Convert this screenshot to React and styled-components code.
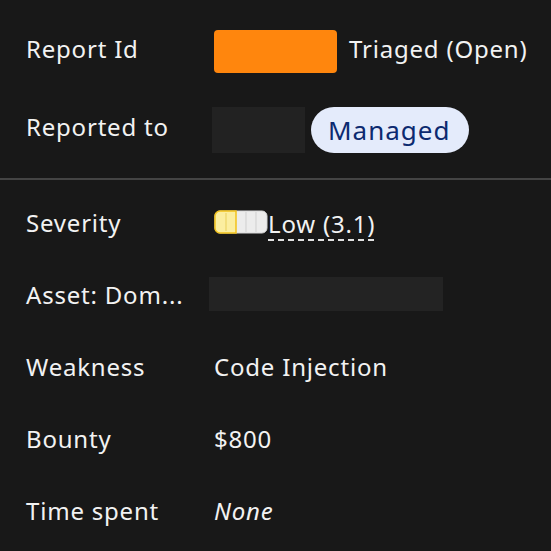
import React from 'react'
import styled, { createGlobalStyle } from 'styled-components';

const GlobalStyle = createGlobalStyle`
  html, body {
    margin: 0;
    padding: 0;
    background: #181818;
  }
  body {
    font-family: "Noto Sans", "Open Sans", sans-serif;
    color: #f2f2f2;
  }
`

const SeverityBar = () => (
  <svg width="54" height="24" viewBox="0 0 54 24">
    <rect x="1" y="1" width="52" height="22" rx="5" fill="#ececec" stroke="#d6d6d6" strokeWidth="1" />
    <line x1="32" y1="2" x2="32" y2="22" stroke="#cfcfcf" strokeWidth="1" />
    <line x1="42" y1="2" x2="42" y2="22" stroke="#cfcfcf" strokeWidth="1" />
    <path d="M6 1 H22 V23 H6 A5 5 0 0 1 1 18 V6 A5 5 0 0 1 6 1 Z" fill="#fbeea0" stroke="#f2c21b" strokeWidth="1.5" />
    <line x1="12" y1="3" x2="12" y2="21" stroke="#e9cf5a" strokeWidth="1" />
  </svg>
)

const App = () => {
  return (
    <Page>
      <GlobalStyle />
      <TopSection>
        <Row $height={78}>
          <Label>Report Id</Label>
          <Value>
            <Redacted $w={123} $h={43} $color="#ff860d" $radius={4} $top={6} />
            <span>Triaged (Open)</span>
          </Value>
        </Row>
        <Row $height={78}>
          <Label>Reported to</Label>
          <Value $gap={6} $offset={8}>
            <Redacted $w={93} $h={46} $color="#222222" $radius={0} $shift={-2} />
            <Pill>Managed</Pill>
          </Value>
        </Row>
      </TopSection>
      <Divider />
      <BottomSection>
        <Row>
          <Label>Severity</Label>
          <Value $gap={0}>
            <SeverityBar />
            <Dashed>Low (3.1)</Dashed>
          </Value>
        </Row>
        <Row>
          <Label>Asset: Dom...</Label>
          <Value>
            <Redacted $w={234} $h={34} $color="#232323" $radius={0} $shift={-5} />
          </Value>
        </Row>
        <Row>
          <Label>Weakness</Label>
          <Value>Code Injection</Value>
        </Row>
        <Row>
          <Label>Bounty</Label>
          <Value>$800</Value>
        </Row>
        <Row>
          <Label>Time spent</Label>
          <Value><em>None</em></Value>
        </Row>
      </BottomSection>
    </Page>
  )
}

export default App;

const Page = styled.div`
  width: 551px;
  height: 551px;
  overflow: hidden;
  background: #181818;
  font-size: 24px;
  letter-spacing: 0.8px;
`

const TopSection = styled.div`
  display: flex;
  flex-direction: column;
  padding: 9px 0 13px;
`

const BottomSection = styled.div`
  display: flex;
  flex-direction: column;
  padding-top: 6px;
`

const Row = styled.div`
  display: grid;
  grid-template-columns: 188px 1fr;
  align-items: center;
  height: ${p => p.$height || 72}px;
  padding-left: 26px;
`

const Label = styled.div`
  white-space: nowrap;
`

const Value = styled.div`
  display: flex;
  align-items: center;
  gap: ${p => p.$gap ?? 12}px;
  padding-top: ${p => p.$offset || 0}px;
  white-space: nowrap;

  em {
    font-style: italic;
  }
`

const Redacted = styled.div`
  width: ${p => p.$w}px;
  height: ${p => p.$h}px;
  background: ${p => p.$color};
  border-radius: ${p => p.$radius}px;
  margin-left: ${p => p.$shift || 0}px;
  margin-top: ${p => p.$top || 0}px;
  flex-shrink: 0;
`

const Pill = styled.span`
  display: inline-flex;
  align-items: center;
  height: 46px;
  padding: 0 19px 0 17px;
  border-radius: 23px;
  background: #e4ebfb;
  color: #0c2a70;
  font-size: 26px;
  letter-spacing: 1px;
`

const Divider = styled.div`
  height: 2px;
  background: #444444;
`

const Dashed = styled.span`
  margin-top: 8px;
  padding-bottom: 4px;
  line-height: 1.1;
  background-image: linear-gradient(to right, #e0e0e0 60%, transparent 60%);
  background-position: left bottom;
  background-size: 10px 2px;
  background-repeat: repeat-x;
`
